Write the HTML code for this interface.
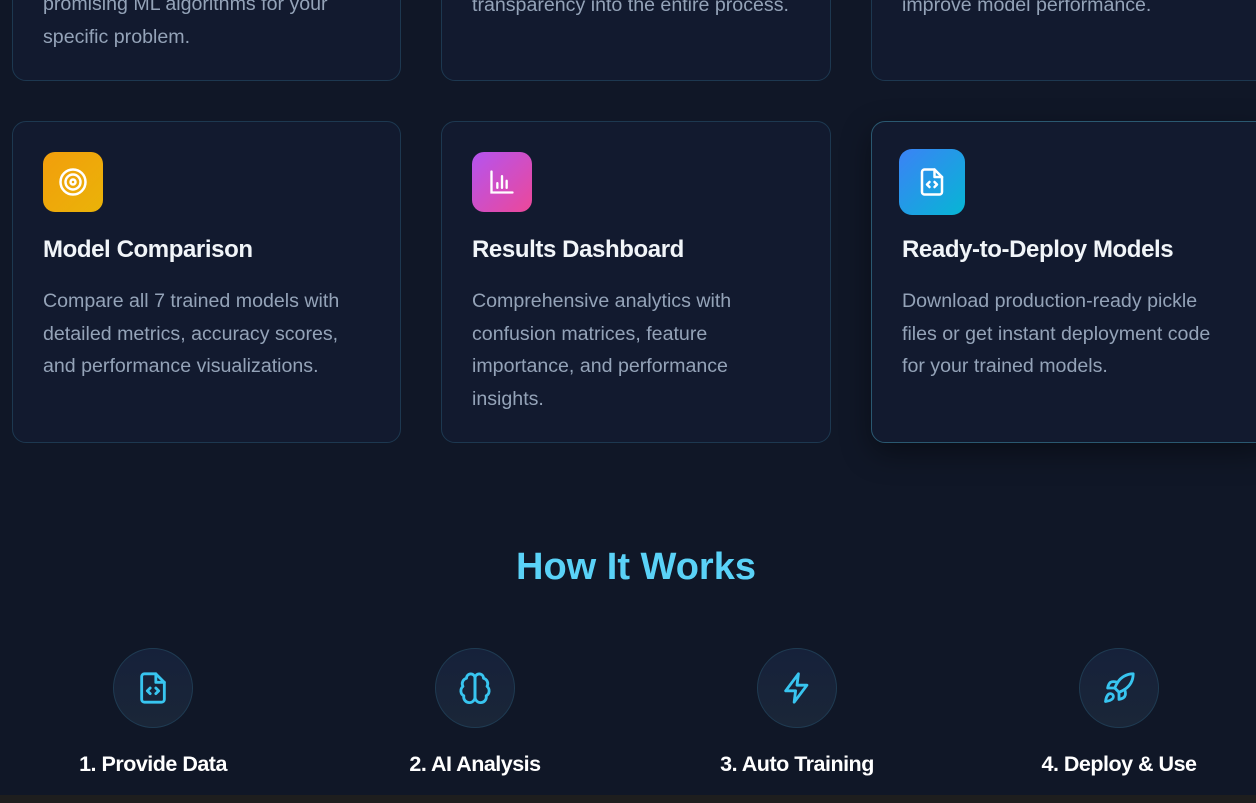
<!DOCTYPE html>
<html><head><meta charset="utf-8"><style>
*{box-sizing:border-box;margin:0;padding:0}
body{width:1256px;height:803px;overflow:hidden;background:#101727;font-family:"Liberation Sans",sans-serif;position:relative}
.card{position:absolute;background:#121a2f;border:1px solid #1d3850;border-radius:14px}
.ic{position:absolute;left:30px;top:30px;width:60px;height:60px;border-radius:12px;display:flex;align-items:center;justify-content:center}
.t{position:absolute;left:30px;top:114px;color:#f1f5f9;font-size:24px;font-weight:bold;letter-spacing:-0.4px}
.d{position:absolute;left:30px;top:163px;width:360px;white-space:nowrap;color:#94a3b8;font-size:19.6px;line-height:32.5px}
.top .d{top:auto;bottom:27px}
h2{position:absolute;left:0;width:1272px;text-align:center;top:546px;color:#5ad2f7;font-size:38px;font-weight:bold}
.step{position:absolute;width:300px;text-align:center;top:648px}
.circ{width:80px;height:80px;border-radius:50%;margin:0 auto;border:1px solid #1f3b52;background:linear-gradient(#16213a,#1a2638);display:flex;align-items:center;justify-content:center}
.lab{margin-top:24px;color:#fff;font-size:21.5px;font-weight:bold;letter-spacing:-0.5px}
.bar{position:absolute;left:0;bottom:0;width:1256px;height:8px;background:#1e1e1e}
</style></head><body>
<div class="card top" style="left:12px;top:-100px;width:389px;height:181px"><div class="d">promising ML algorithms for your<br>specific problem.</div></div>
<div class="card top" style="left:441px;top:-100px;width:390px;height:181px"><div class="d" style="bottom:59px">transparency into the entire process.</div></div>
<div class="card top" style="left:871px;top:-100px;width:400px;height:181px"><div class="d" style="bottom:59px">improve model performance.</div></div>

<div class="card" style="left:12px;top:121px;width:389px;height:322px">
<div class="ic" style="background:linear-gradient(135deg,#f29e0c,#eab308)"><svg width="30" height="30" viewBox="0 0 24 24" fill="none" stroke="#fff" stroke-width="2"><circle cx="12" cy="12" r="10"/><circle cx="12" cy="12" r="6"/><circle cx="12" cy="12" r="2"/></svg></div>
<div class="t">Model Comparison</div>
<div class="d">Compare all 7 trained models with<br>detailed metrics, accuracy scores,<br>and performance visualizations.</div></div>

<div class="card" style="left:441px;top:121px;width:390px;height:322px">
<div class="ic" style="background:linear-gradient(135deg,#b454f0,#ec4899)"><svg width="28" height="28" viewBox="0 0 24 24" fill="none" stroke="#fff" stroke-width="2" stroke-linecap="round"><path d="M3 3v18h18"/><path d="M8 17v-4M12 17V7M16 17v-6"/></svg></div>
<div class="t">Results Dashboard</div>
<div class="d">Comprehensive analytics with<br>confusion matrices, feature<br>importance, and performance<br>insights.</div></div>

<div class="card" style="left:871px;top:121px;width:400px;height:322px;border-color:#2a5870;box-shadow:0 10px 30px rgba(0,0,0,.4)">
<div class="ic" style="left:27px;top:27px;width:66px;height:66px;border-radius:13px;background:linear-gradient(135deg,#3b82f6,#06b6d4)"><svg width="30" height="30" viewBox="0 0 24 24" fill="none" stroke="#fff" stroke-width="2" stroke-linecap="round" stroke-linejoin="round"><path d="M14 2H6a2 2 0 0 0-2 2v16a2 2 0 0 0 2 2h12a2 2 0 0 0 2-2V8z"/><path d="M14 2v6h6"/><path d="M10 12l-2 2 2 2M14 12l2 2-2 2"/></svg></div>
<div class="t">Ready-to-Deploy Models</div>
<div class="d">Download production-ready pickle<br>files or get instant deployment code<br>for your trained models.</div></div>

<h2>How It Works</h2>
<div class="step" style="left:3px"><div class="circ"><svg width="34" height="34" viewBox="0 0 24 24" fill="none" stroke="#38c5f0" stroke-width="2" stroke-linecap="round" stroke-linejoin="round"><path d="M14 2H6a2 2 0 0 0-2 2v16a2 2 0 0 0 2 2h12a2 2 0 0 0 2-2V8z"/><path d="M14 2v6h6"/><path d="M10 12l-2 2 2 2M14 12l2 2-2 2"/></svg></div><div class="lab">1. Provide Data</div></div>
<div class="step" style="left:325px"><div class="circ"><svg width="34" height="34" viewBox="0 0 24 24" fill="none" stroke="#38c5f0" stroke-width="2" stroke-linecap="round" stroke-linejoin="round"><path d="M12 5a3 3 0 1 0-6 .1 4 4 0 0 0-2.5 5.8 4 4 0 0 0 .6 6.6A4 4 0 1 0 12 18z"/><path d="M12 5a3 3 0 1 1 6 .1 4 4 0 0 1 2.5 5.8 4 4 0 0 1-.6 6.6A4 4 0 1 1 12 18z"/><path d="M12 5v13"/></svg></div><div class="lab">2. AI Analysis</div></div>
<div class="step" style="left:647px"><div class="circ"><svg width="34" height="34" viewBox="0 0 24 24" fill="none" stroke="#38c5f0" stroke-width="2" stroke-linecap="round" stroke-linejoin="round"><path d="M13 2L4 14h7l-1 8 9-12h-7z"/></svg></div><div class="lab">3. Auto Training</div></div>
<div class="step" style="left:969px"><div class="circ"><svg width="34" height="34" viewBox="0 0 24 24" fill="none" stroke="#38c5f0" stroke-width="2" stroke-linecap="round" stroke-linejoin="round"><path d="M4.5 16.5c-1.5 1.3-2 5-2 5s3.7-.5 5-2c.7-.8.7-2.1-.1-2.9a2.2 2.2 0 0 0-2.9-.1z"/><path d="M12 15l-3-3a22 22 0 0 1 2-3.9A12.9 12.9 0 0 1 22 2c0 2.7-.8 7.5-6 11a22 22 0 0 1-4 2z"/><path d="M9 12H4s.6-3 2-4c1.6-1.1 5 0 5 0M12 15v5s3-.6 4-2c1.1-1.6 0-5 0-5"/></svg></div><div class="lab">4. Deploy &amp; Use</div></div>
<div class="bar"></div>
</body></html>
